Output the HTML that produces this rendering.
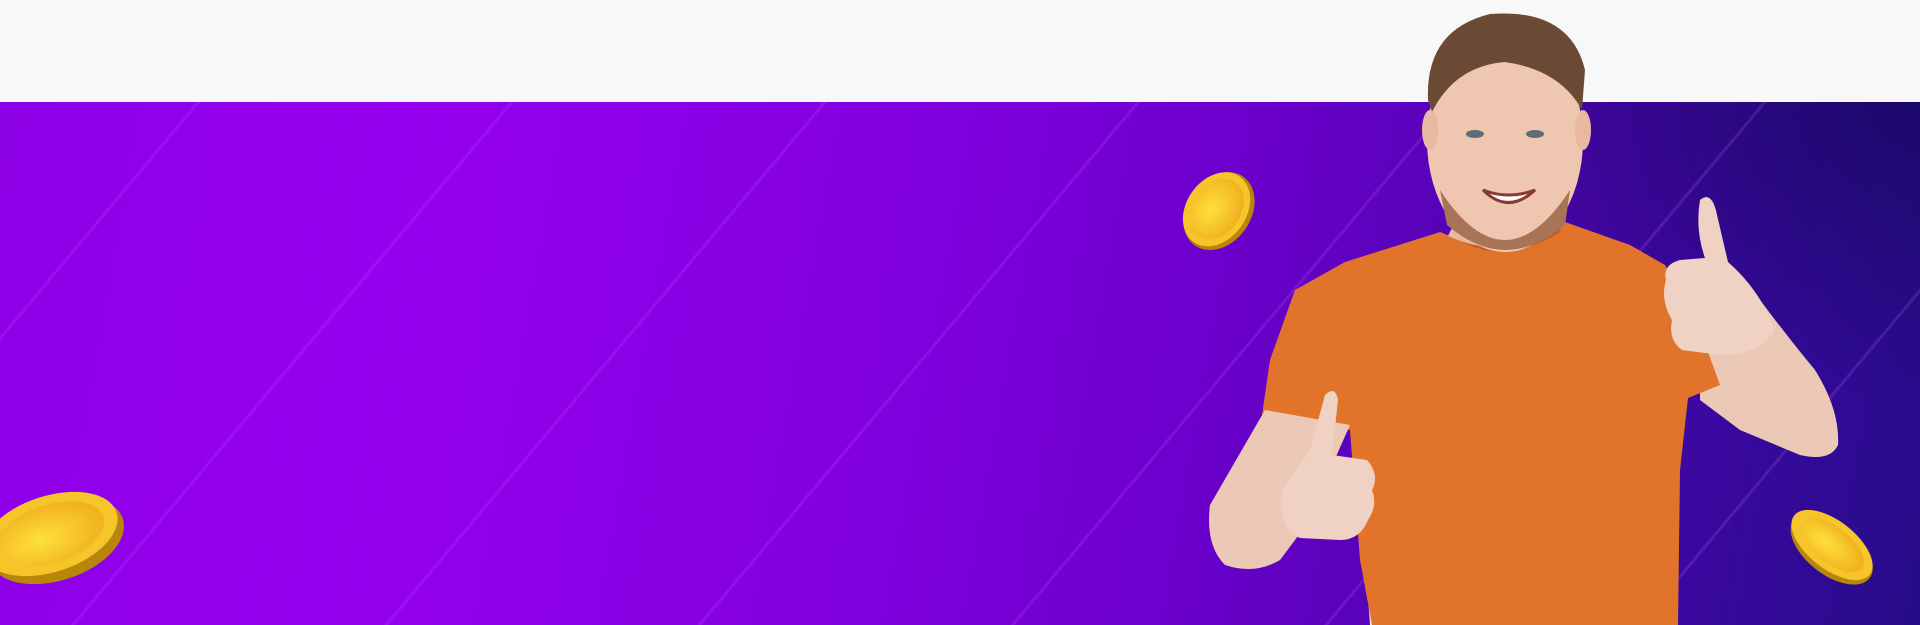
<!DOCTYPE html>
<html><head><style>
html,body{margin:0;padding:0;width:1920px;height:625px;overflow:hidden;background:#f8f8f8;}
.ban{position:absolute;left:0;top:102px;width:1920px;height:523px;
background:
repeating-linear-gradient(130deg,rgba(255,255,255,0) 0 150px,rgba(190,80,255,.22) 151px 153px,rgba(255,255,255,0) 154px 240px),
radial-gradient(ellipse 500px 300px at 1920px 0,rgba(20,8,90,.7),rgba(20,8,90,0)),
linear-gradient(100deg,#8c00e6 0%,#9600ee 20%,#8200e0 45%,#6c00cc 62%,#4c04ae 78%,#330a98 92%,#260c88 100%);}
svg{position:absolute;left:0;top:0;}
</style></head><body>
<div class="ban"></div>
<svg width="1920" height="625" viewBox="0 0 1920 625">
<defs>
<radialGradient id="cg" cx="40%" cy="55%" r="60%"><stop offset="0" stop-color="#ffe13a"/><stop offset="1" stop-color="#f0b020"/></radialGradient>
</defs>
<g transform="translate(1219,211) rotate(35)"><ellipse rx="32" ry="42" fill="#b8860b"/><ellipse cx="-3" rx="30" ry="40" fill="#f5c52a"/><ellipse cx="-3" rx="24" ry="33" fill="url(#cg)"/></g>
<g transform="translate(50,534) rotate(-18)"><ellipse cx="4" cy="8" rx="70" ry="40" fill="#b8860b"/><ellipse rx="70" ry="38" fill="#f5c52a"/><ellipse rx="56" ry="29" fill="url(#cg)"/></g>
<g transform="translate(1832,545) rotate(38)"><ellipse cx="2" cy="3" rx="48" ry="26" fill="#b8860b"/><ellipse rx="48" ry="24" fill="#f5c52a"/><ellipse rx="38" ry="18" fill="url(#cg)"/></g>
<path d="M1361,500 L1398,500 L1398,625 L1370,625 Z" fill="#ece8e6"/>
<path d="M1700,330 L1760,300 Q1790,340 1815,370 Q1840,410 1838,445 Q1830,462 1800,455 L1740,430 L1700,400 Z" fill="#ecc8b6"/>
<path d="M1440,232 Q1505,260 1565,222 L1630,245 L1665,265 L1700,330 L1720,385 L1688,398 L1680,470 L1678,625 L1372,625 L1360,560 L1350,430 L1262,415 L1270,360 L1295,290 L1345,262 Z" fill="#e2732a"/>
<path d="M1460,238 Q1505,265 1560,230" stroke="#c85e1d" stroke-width="4" fill="none"/>
<path d="M1458,215 L1550,210 L1560,228 Q1505,262 1448,236 Z" fill="#e8b8a0"/>
<ellipse cx="1505" cy="140" rx="78" ry="112" fill="#efc6b0"/>
<path d="M1440,190 Q1505,290 1570,190 L1565,225 Q1505,275 1447,225 Z" fill="#a87458"/>
<path d="M1428,100 Q1425,30 1490,14 Q1570,8 1585,70 L1582,110 Q1560,70 1505,62 Q1455,66 1432,112 Z" fill="#6b4a35"/>
<ellipse cx="1430" cy="130" rx="8" ry="20" fill="#e8b8a0"/><ellipse cx="1583" cy="130" rx="8" ry="20" fill="#e8b8a0"/>
<path d="M1483,190 Q1508,215 1535,190 Q1508,200 1483,190 Z" fill="#fff" stroke="#8a3a30" stroke-width="3"/>
<ellipse cx="1475" cy="134" rx="9" ry="4" fill="#5d6e7a"/><ellipse cx="1535" cy="134" rx="9" ry="4" fill="#5d6e7a"/>
<path d="M1700,200 Q1712,190 1717,215 L1728,262 Q1760,290 1775,330 Q1760,355 1720,355 L1682,350 Q1668,340 1672,320 Q1660,300 1666,280 Q1662,265 1680,260 L1705,258 Q1695,230 1700,200 Z" fill="#f0d2c4"/>
<path d="M1265,410 L1350,425 L1330,470 L1310,520 L1280,560 Q1255,575 1225,565 Q1205,545 1210,505 Z" fill="#ecc8b6"/>
<path d="M1325,395 Q1335,385 1338,400 L1332,455 L1367,460 Q1380,475 1372,490 Q1378,505 1368,520 Q1360,540 1340,540 L1300,538 Q1278,530 1282,490 L1310,450 Z" fill="#f0d2c4"/>
</svg>
</body></html>
